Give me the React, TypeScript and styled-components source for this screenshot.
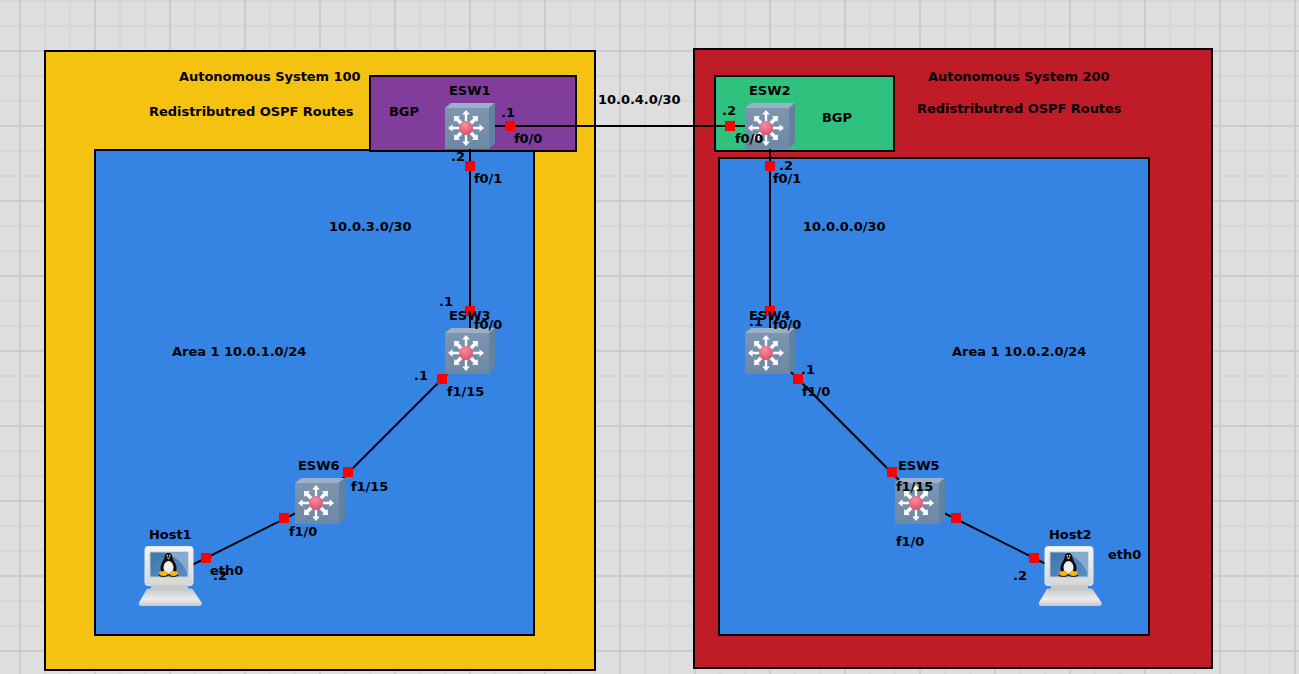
import { createGlobalStyle, styled } from "styled-components"

const GlobalStyle = createGlobalStyle`
  html, body {
    margin: 0;
    padding: 0;
    overflow: hidden;
  }
`

const Canvas = styled.div`
  position: relative;
  width: 1299px;
  height: 674px;
  overflow: hidden;
  background-color: #dedede;
  background-image:
    linear-gradient(to right, #cbcbcb 2px, transparent 2px),
    linear-gradient(to bottom, #cbcbcb 2px, transparent 2px),
    linear-gradient(to right, #d6d6d6 2px, transparent 2px),
    linear-gradient(to bottom, #d6d6d6 2px, transparent 2px);
  background-size: 75px 75px, 75px 75px, 25px 25px, 25px 25px;
  background-position: 19px 0, 0 50px, 19px 0, 0 0;
  font-family: "DejaVu Sans", sans-serif;
`

const Zone = styled.div<{ $x: number; $y: number; $w: number; $h: number; $fill: string }>`
  position: absolute;
  left: ${(p) => p.$x}px;
  top: ${(p) => p.$y}px;
  width: ${(p) => p.$w}px;
  height: ${(p) => p.$h}px;
  box-sizing: border-box;
  border: 2px solid #000;
  background: ${(p) => p.$fill};
`

const Wires = styled.svg`
  position: absolute;
  left: 0;
  top: 0;
`

const Device = styled.div<{ $x: number; $y: number }>`
  position: absolute;
  left: ${(p) => p.$x}px;
  top: ${(p) => p.$y}px;
  line-height: 0;
`

const Port = styled.div<{ $x: number; $y: number }>`
  position: absolute;
  left: ${(p) => p.$x - 5}px;
  top: ${(p) => p.$y - 5}px;
  width: 10px;
  height: 10px;
  background: #ff0000;
`

const Label = styled.span<{ $x: number; $y: number }>`
  position: absolute;
  left: ${(p) => p.$x}px;
  top: ${(p) => p.$y - 8}px;
  font-size: 13px;
  letter-spacing: -0.04px;
  line-height: 16px;
  font-weight: 700;
  color: #000;
  white-space: nowrap;
`

const zones = [
  { x: 44, y: 50, w: 552, h: 621, fill: "#f5c211" },
  { x: 693, y: 48, w: 520, h: 621, fill: "#c01c28" },
  { x: 94, y: 149, w: 441, h: 487, fill: "#3584e4" },
  { x: 718, y: 157, w: 432, h: 479, fill: "#3584e4" },
  { x: 369, y: 75, w: 208, h: 77, fill: "#813d9c" },
  { x: 714, y: 75, w: 181, h: 77, fill: "#2ec27e" },
]

const links = [
  [470, 126, 770, 126],
  [470, 126, 470, 351],
  [770, 126, 770, 351],
  [470, 351, 320, 501],
  [770, 351, 920, 501],
  [320, 501, 170, 576],
  [920, 501, 1070, 576],
]

const switches = [
  [445, 103],
  [745, 103],
  [445, 328],
  [745, 328],
  [295, 478],
  [895, 478],
]

const hosts = [
  [137, 546],
  [1037, 546],
]

const ports = [
  [510, 126],
  [470, 166],
  [730, 126],
  [770, 166],
  [470, 311],
  [442, 379],
  [770, 311],
  [798, 379],
  [348, 472],
  [284, 518],
  [892, 472],
  [956, 518],
  [206, 558],
  [1034, 558],
]

const labels: [string, number, number][] = [
  ["Autonomous System 100", 179, 77],
  ["Redistributred OSPF Routes", 149, 112],
  ["BGP", 389, 112],
  ["ESW1", 449, 91],
  [".1", 501, 113],
  ["f0/0", 514, 139],
  [".2", 451, 157],
  ["f0/1", 474, 179],
  ["10.0.4.0/30", 598, 100],
  ["Autonomous System 200", 928, 77],
  ["Redistributred OSPF Routes", 917, 109],
  ["ESW2", 749, 91],
  ["BGP", 822, 118],
  [".2", 722, 111],
  ["f0/0", 735, 139],
  [".2", 779, 166],
  ["f0/1", 773, 179],
  ["10.0.3.0/30", 329, 227],
  ["10.0.0.0/30", 803, 227],
  [".1", 439, 302],
  ["ESW3", 449, 316],
  ["f0/0", 474, 325],
  ["Area 1 10.0.1.0/24", 172, 352],
  [".1", 414, 376],
  ["f1/15", 447, 392],
  ["ESW6", 298, 466],
  ["f1/15", 351, 487],
  ["f1/0", 289, 532],
  ["Host1", 149, 535],
  ["eth0", 210, 571],
  [".2", 213, 576],
  ["ESW4", 749, 316],
  [".1", 749, 322],
  ["f0/0", 773, 325],
  ["Area 1 10.0.2.0/24", 952, 352],
  [".1", 801, 370],
  ["f1/0", 802, 392],
  ["ESW5", 898, 466],
  ["f1/15", 896, 487],
  ["f1/0", 896, 542],
  ["Host2", 1049, 535],
  ["eth0", 1108, 555],
  [".2", 1013, 576],
]

const straightArrow = "M21 23.800h13.500v-2.600l4.500 3.800-4.500 3.800v-2.600H21z"
const diagonalArrow = "M21 23.200h12.500v-2.200l4.500 4-4.500 4v-2.200H21z"

function SwitchIcon() {
  return (
    <svg width="50" height="47" viewBox="0 0 50 47">
      <defs>
        <linearGradient id="face" x1="0" y1="0" x2="0" y2="1">
          <stop offset="0" stopColor="#7c96b2" />
          <stop offset="1" stopColor="#6c88a4" />
        </linearGradient>
        <radialGradient id="ball" cx="0.42" cy="0.3" r="0.8">
          <stop offset="0" stopColor="#f58ea2" />
          <stop offset="1" stopColor="#dd4566" />
        </radialGradient>
      </defs>
      <polygon points="0,5 6,0 50,0 44,5" fill="#9cb0c8" />
      <polygon points="44,5 50,0 50,40 44,46" fill="#63829f" />
      <rect x="0" y="5" width="44" height="41" fill="url(#face)" />
      {[0, 45, 90, 135, 180, 225, 270, 315].map((deg) => (
        <path
          key={deg}
          d={deg % 90 === 0 ? straightArrow : diagonalArrow}
          transform={`rotate(${deg} 21 25)`}
          fill="#fff"
        />
      ))}
      <circle cx="21" cy="25" r="7" fill="url(#ball)" />
    </svg>
  )
}

function HostIcon() {
  return (
    <svg width="66" height="60" viewBox="0 0 66 60">
      <defs>
        <linearGradient id="shell" x1="0" y1="0" x2="0" y2="1">
          <stop offset="0" stopColor="#f6f6f6" />
          <stop offset="1" stopColor="#d6d6d6" />
        </linearGradient>
        <linearGradient id="deck" x1="0" y1="0" x2="0" y2="1">
          <stop offset="0" stopColor="#c4c4c4" />
          <stop offset="0.6" stopColor="#ececec" />
          <stop offset="1" stopColor="#c8c8c8" />
        </linearGradient>
        <linearGradient id="screen" x1="0" y1="0" x2="1" y2="1">
          <stop offset="0" stopColor="#3d75aa" />
          <stop offset="1" stopColor="#5c8fc0" />
        </linearGradient>
      </defs>
      <rect x="8" y="0.5" width="48" height="39" rx="3" fill="url(#shell)" stroke="#e8e8e8" />
      <rect x="13" y="6" width="38" height="25" fill="url(#screen)" stroke="#bcc8d4" />
      <path d="M26 6.500h24.500v21q-6-16-24.500-21z" fill="#86abd0" />
      <rect x="14" y="39" width="37" height="4" fill="#c8c8c8" />
      <path d="M11 42.500h43q1.500 0 2.500 2l8 12q1 3-2 3.500H4q-3-.5-2-3.500l7-12q.8-2 2-2z" fill="url(#deck)" />
      {/* tux */}
      <path d="M31.500 7c2.500 0 4 2 4 4.500 0 2.500 4 6 4 10.500 0 3.500-1.500 6.500-3 7h-10c-1.500-.5-3-3.500-3-7 0-4.500 4-8 4-10.500C27.500 9 29 7 31.500 7z" fill="#0c0c0c" />
      <ellipse cx="31.500" cy="21.500" rx="5" ry="6.500" fill="#f0f0f0" />
      <path d="M29.500 11.500h4l-2 2z" fill="#f0b020" />
      <circle cx="30.300" cy="9.800" r="0.800" fill="#fff" />
      <circle cx="32.700" cy="9.800" r="0.800" fill="#fff" />
      <ellipse cx="26.500" cy="29" rx="4.700" ry="1.800" fill="#0c0c0c" />
      <ellipse cx="36.500" cy="29" rx="4.700" ry="1.800" fill="#0c0c0c" />
      <ellipse cx="26.500" cy="27.500" rx="4.300" ry="2.400" fill="#f6b50f" />
      <ellipse cx="36.500" cy="27.500" rx="4.300" ry="2.400" fill="#f6b50f" />
    </svg>
  )
}

export default function App() {
  return (
    <Canvas>
      <GlobalStyle />
      {zones.map((z) => (
        <Zone key={`${z.x}-${z.y}`} $x={z.x} $y={z.y} $w={z.w} $h={z.h} $fill={z.fill} />
      ))}
      <Wires width="1299" height="674">
        {links.map(([x1, y1, x2, y2]) => (
          <line key={`${x1}-${y1}-${x2}`} x1={x1} y1={y1} x2={x2} y2={y2} stroke="#000" strokeWidth="2" />
        ))}
      </Wires>
      {switches.map(([x, y]) => (
        <Device key={`${x}-${y}`} $x={x} $y={y}>
          <SwitchIcon />
        </Device>
      ))}
      {hosts.map(([x, y]) => (
        <Device key={`${x}-${y}`} $x={x} $y={y}>
          <HostIcon />
        </Device>
      ))}
      {ports.map(([x, y]) => (
        <Port key={`${x}-${y}`} $x={x} $y={y} />
      ))}
      {labels.map(([text, x, y]) => (
        <Label key={`${text}-${x}-${y}`} $x={x} $y={y}>
          {text}
        </Label>
      ))}
    </Canvas>
  )
}
